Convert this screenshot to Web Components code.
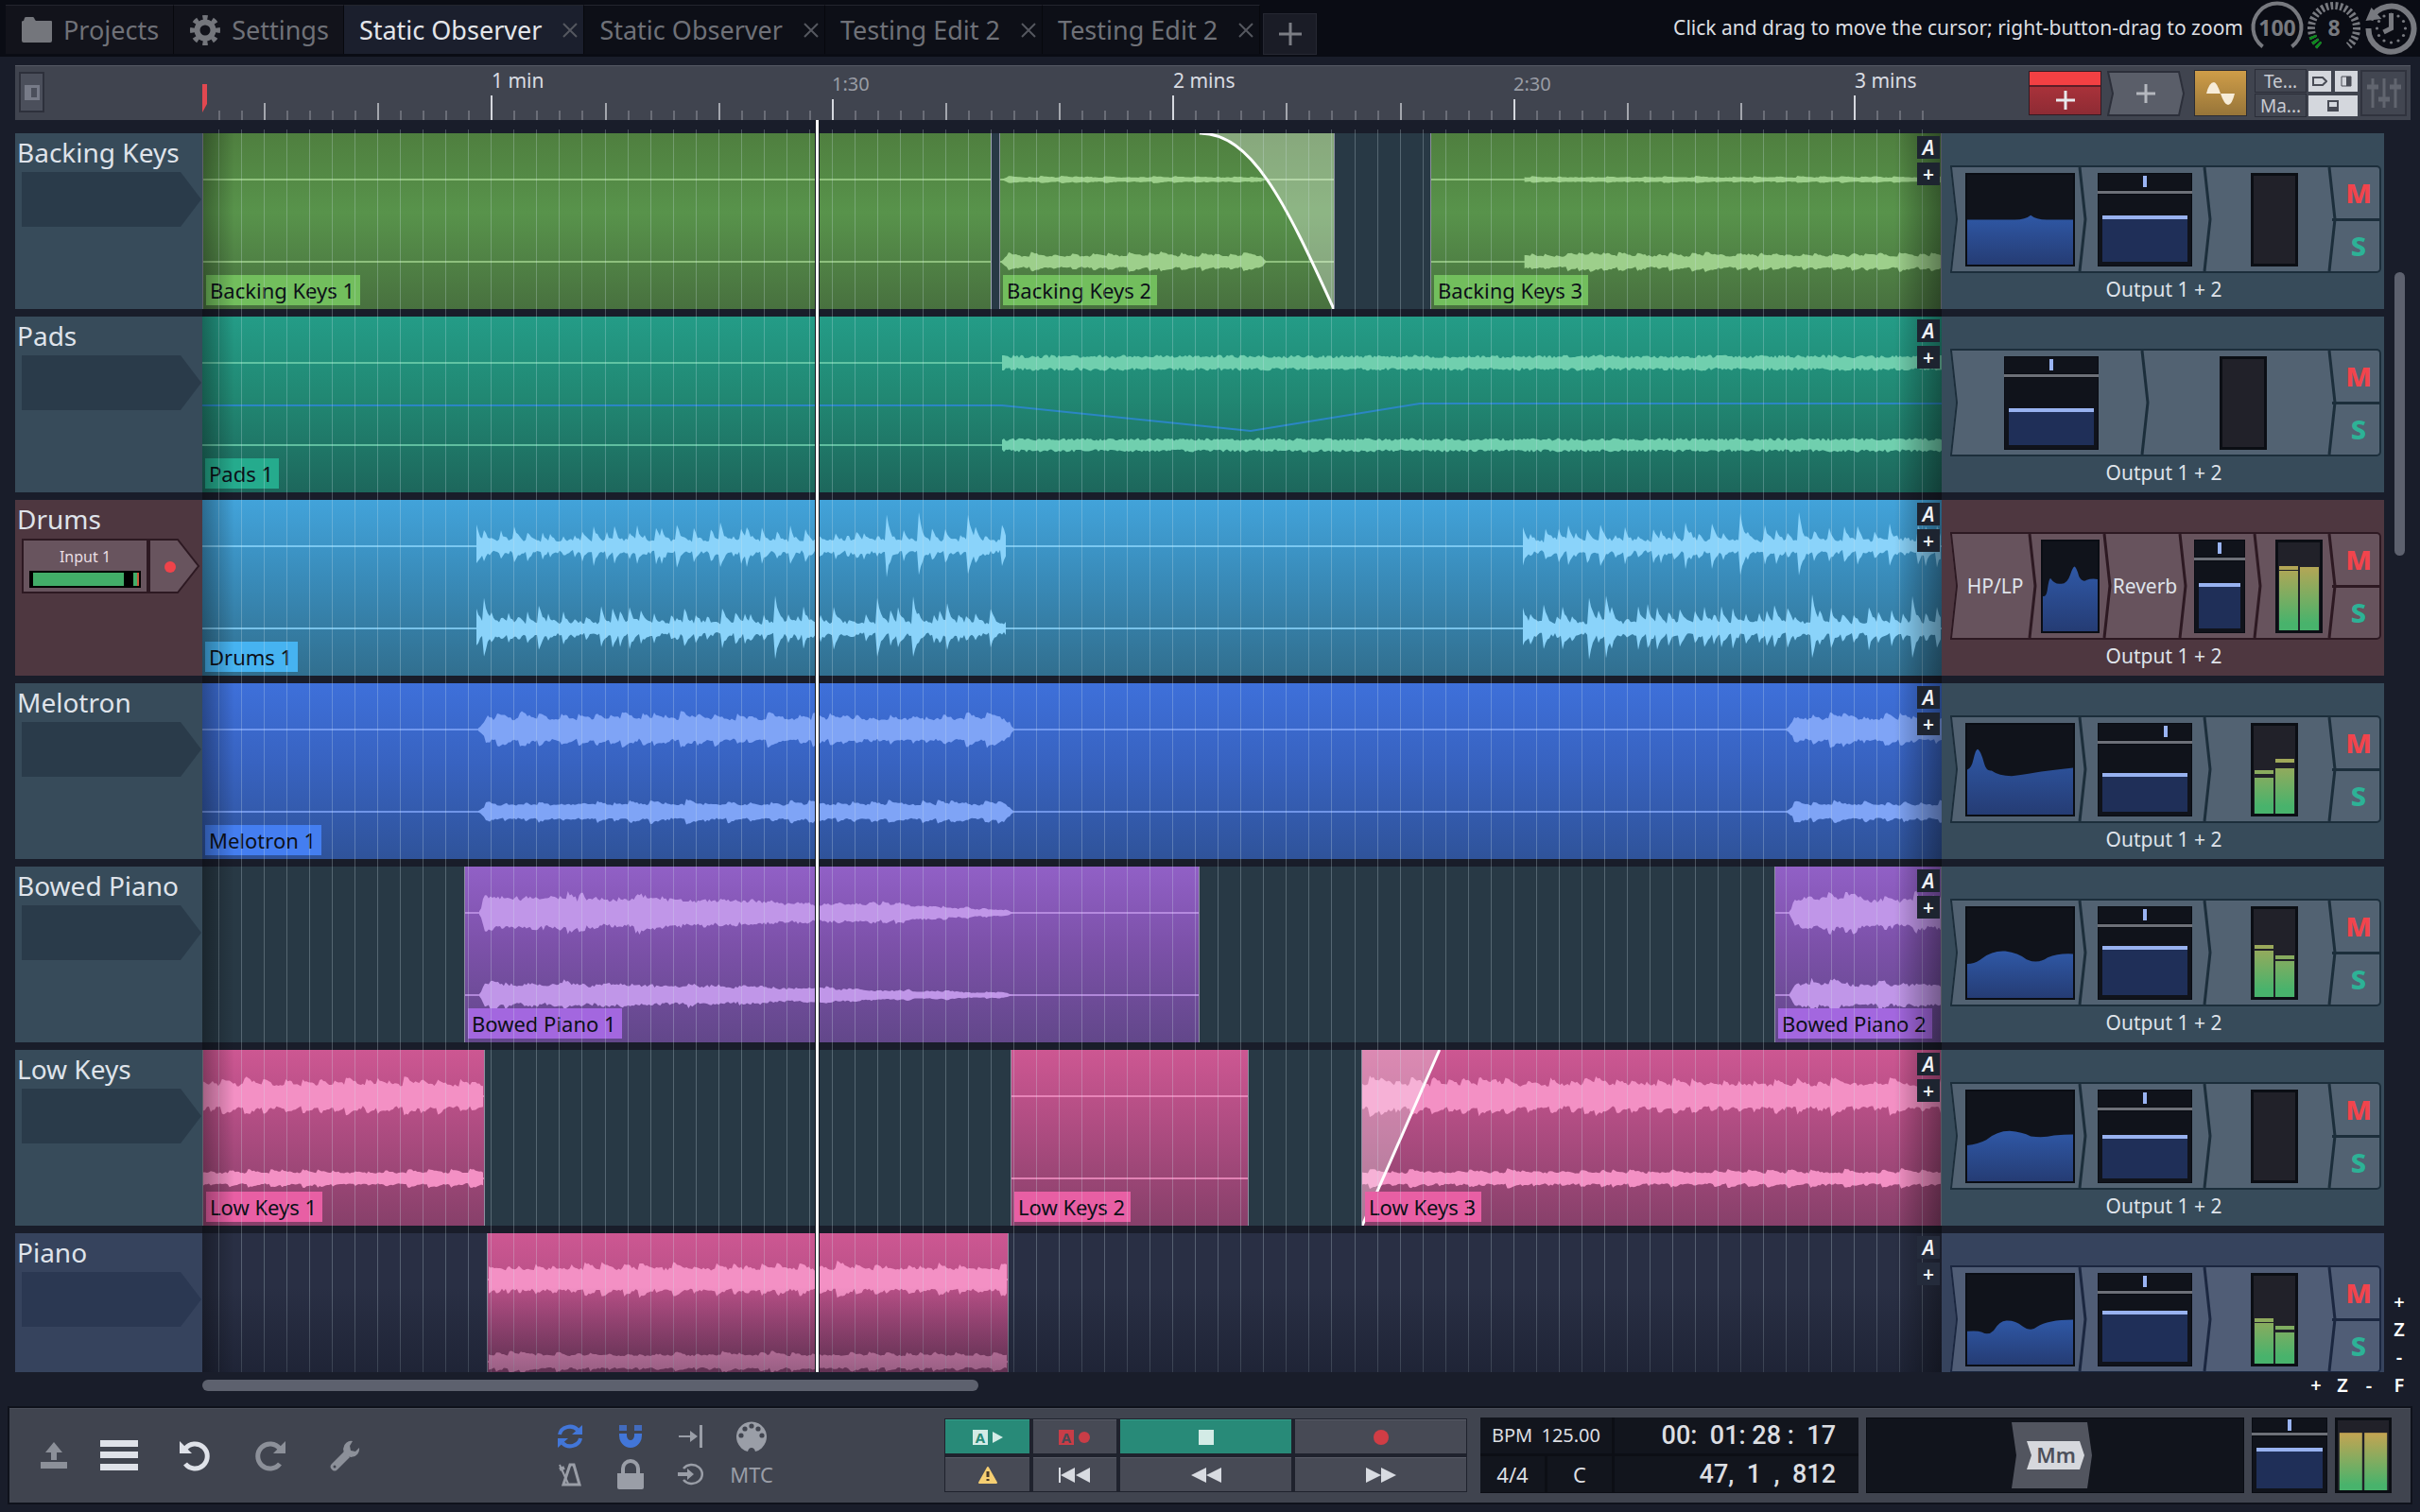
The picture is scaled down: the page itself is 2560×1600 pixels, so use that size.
<!DOCTYPE html>
<html lang="en">
<head>
<meta charset="utf-8">
<title>Static Observer</title>
<style>
  html, body { margin: 0; height: 100%; background: #191d2a; }
  body { font-family: "Noto Sans", "Open Sans", sans-serif; color: #dfe3ea; overflow: hidden; }
</style>
</head>
<body>
<daw-app></daw-app>
<script>
const BASE = `
  *, *::before, *::after { box-sizing: border-box; }
  button { font: inherit; color: inherit; background: none; border: 0; padding: 0; margin: 0; }
  svg { display: block; }
`;

// timeline scale, in design pixels
const TL = 1840;
const ROW = 186;
const ORIGIN = 214;
const STEP = 24.03;
const pct = v => (v / TL * 100).toFixed(3) + '%';

function rng(seed) {
  let s = seed;
  return () => {
    s = (s * 1664525 + 1013904223) % 4294967296;
    return s / 4294967296;
  };
}

// one channel of a waveform, as a closed path round the line y
function wavePath(seg, y, amp, rand) {
  const up = [], down = [];
  const len = seg.to - seg.from;
  let hit = 1, since = 0, next = 8, swell = 0.85;
  for (let x = 0; x <= len; x += 2) {
    const t = x / len;
    let a, b;
    if (seg.kind === 'drum') {
      if (since >= next) {
        hit = 0.3 + rand() * 0.9;
        if (rand() < 0.07) hit = 1.8;
        since = 0;
        next = 5 + rand() * 12;
      }
      a = 0.22 + hit * Math.exp(-since / 4) + rand() * 0.25;
      b = 0.22 + hit * 0.9 * Math.exp(-since / 4) + rand() * 0.25;
      since += 2;
    } else if (seg.kind === 'decay') {
      const env = t < 0.35 ? 1 : 1 - (t - 0.35) * 1.25;
      swell += (rand() - 0.5) * 0.2;
      swell = Math.min(0.95, Math.max(0.7, swell));
      if (rand() < 0.05) hit = 1.45;
      hit = Math.max(1, hit - 0.07);
      a = env * hit * (swell + rand() * 0.25);
      b = env * hit * (swell + rand() * 0.25);
    } else if (seg.kind === 'dense') {
      a = 0.5 + rand() * 0.35;
      b = 0.5 + rand() * 0.35;
    } else {
      if (since >= next) {
        swell = 0.85 + rand() * 0.4;
        since = 0;
        next = 10 + rand() * 14;
      }
      swell = Math.max(0.64, swell - 0.06);
      since += 2;
      a = swell + rand() * 0.2;
      b = swell + rand() * 0.2;
    }
    const ease = Math.min(1, x / (seg.soft || 1), (len - x) / (seg.soft || 1));
    const k = amp * (seg.soft ? Math.max(0.1, ease) : 1);
    up.push((seg.from + x).toFixed(0) + ' ' + (y - a * k).toFixed(1));
    down.unshift((seg.from + x).toFixed(0) + ' ' + (y + b * k).toFixed(1));
  }
  return 'M' + up.join('L') + 'L' + down.join('L') + 'Z';
}

const COLORS = {
  green:  { top: '#4f7f3f', mid: '#58934b', end: '#48713f', wave: '#9dcf8b', tag: '#72be5d' },
  teal:   { top: '#249c87', mid: '#218873', end: '#1d675c', wave: '#70cfae', tag: '#25ab8d' },
  sky:    { top: '#42a3da', mid: '#398bb9', end: '#316f8f', wave: '#8ad3fa', tag: '#46b3f1' },
  blue:   { top: '#3e70da', mid: '#3863c1', end: '#2f539a', wave: '#7fa4f6', tag: '#447ef0' },
  purple: { top: '#9160c6', mid: '#7c51a9', end: '#62478a', wave: '#c096e8', tag: '#a367df' },
  pink:   { top: '#cd5792', mid: '#ae4c81', end: '#87406a', wave: '#f390c4', tag: '#e85fa4' }
};

const THEMES = {
  slate: { head: '#374b5a', lane: '#283945', dark: '#2a3b4a', slot: '#526272', edge: '#1c2e3b' },
  wine:  { head: '#4e3740', lane: '#283945', dark: '#33222a', slot: '#67535d', edge: '#2d1922' },
  navy:  { head: '#36435d', lane: '#292f44', dark: '#2b3852', slot: '#505d76', edge: '#1b2740' }
};

const TRACKS = [
  { name: 'Backing Keys', theme: 'slate', output: 'Output 1 + 2', plugins: [
      { type: 'eq', d: 'M0 50H45Q55 50 60 45Q65 50 75 50H100' }, { type: 'fader', vol: 67 }, { type: 'meter' }],
    clips: [
      { name: 'Backing Keys 1', color: 'green', from: 214, to: 1049, amps: [2, 2], waves: [] },
      { name: 'Backing Keys 2', color: 'green', from: 1057, to: 1412, amps: [3, 8], fadeOut: 1269, waves: [{ from: 1058, to: 1340, soft: 6 }] },
      { name: 'Backing Keys 3', color: 'green', from: 1513, to: 2054, amps: [3, 8], waves: [{ from: 1612, to: 2054 }] }] },
  { name: 'Pads', theme: 'slate', output: 'Output 1 + 2', plugins: [{ type: 'fader', vol: 52 }, { type: 'meter' }],
    clips: [
      { name: 'Pads 1', color: 'teal', from: 214, to: 2054, amps: [10, 9], waves: [{ from: 1060, to: 2054, kind: 'dense' }],
        curve: '214 94 1060 94 1323 121 1502 92 2054 92' }] },
  { name: 'Drums', theme: 'wine', output: 'Output 1 + 2', input: true, plugins: [
      { type: 'text', text: 'HP/LP' },
      { type: 'eq', w: 62, d: 'M0 61Q6 62 8 55Q11 41 14 41Q22 48 32 47Q44 48 50 37Q55 28 58 28Q62 30 66 39Q72 46 80 43Q88 41 100 42' },
      { type: 'text', text: 'Reverb' },
      { type: 'fader', vol: 65, w: 54 },
      { type: 'meter', levels: [[28, 33], [29, 33]] }],
    clips: [
      { name: 'Drums 1', color: 'sky', from: 214, to: 2054, amps: [16, 16], waves: [{ from: 504, to: 1064, kind: 'drum' }, { from: 1611, to: 2054, kind: 'drum' }] }] },
  { name: 'Melotron', theme: 'slate', output: 'Output 1 + 2', plugins: [
      { type: 'eq', d: 'M0 50Q4 49 6 38Q8 27 10 27Q13 29 16 43Q18 52 23 51Q30 57 42 57Q60 54 70 52Q84 50 100 48' },
      { type: 'fader', pan: 75, vol: 55 }, { type: 'meter', levels: [[50, 58], [38, 48]] }],
    clips: [
      { name: 'Melotron 1', color: 'blue', from: 214, to: 2054, amps: [15, 10], waves: [{ from: 506, to: 1072, soft: 9 }, { from: 1890, to: 2070, soft: 9 }] }] },
  { name: 'Bowed Piano', theme: 'slate', output: 'Output 1 + 2', plugins: [
      { type: 'eq', d: 'M0 62Q8 62 14 56Q24 47 36 48Q48 50 56 57Q66 63 76 55Q86 50 100 51' },
      { type: 'fader', vol: 72 }, { type: 'meter', levels: [[41, 47], [52, 58]] }],
    clips: [
      { name: 'Bowed Piano 1', color: 'purple', from: 491, to: 1269, amps: [16, 11], waves: [{ from: 506, to: 1072, kind: 'decay', soft: 6 }] },
      { name: 'Bowed Piano 2', color: 'purple', from: 1877, to: 2054, amps: [15, 11], waves: [{ from: 1892, to: 2440, kind: 'decay', soft: 6 }] }] },
  { name: 'Low Keys', theme: 'slate', output: 'Output 1 + 2', plugins: [
      { type: 'eq', d: 'M0 60Q10 59 18 54Q28 44 40 44Q52 45 60 50Q72 52 82 49Q92 48 100 48' },
      { type: 'fader', vol: 63 }, { type: 'meter' }],
    clips: [
      { name: 'Low Keys 1', color: 'pink', from: 214, to: 513, amps: [16, 8], waves: [{ from: 214, to: 513 }] },
      { name: 'Low Keys 2', color: 'pink', from: 1069, to: 1321, amps: [2, 2], waves: [] },
      { name: 'Low Keys 3', color: 'pink', from: 1440, to: 2054, amps: [16, 8], fadeIn: 1522, waves: [{ from: 1440, to: 2054 }] }] },
  { name: 'Piano', theme: 'navy', plugins: [
      { type: 'eq', d: 'M0 63Q10 62 14 64Q20 68 25 62Q31 50 38 51Q46 51 52 57Q60 64 66 58Q76 50 100 50' },
      { type: 'fader', vol: 75 }, { type: 'meter', levels: [[48, 53], [56, 63]] }],
    clips: [
      { name: '', color: 'pink', from: 515, to: 1067, amps: [15, 9], waves: [{ from: 516, to: 1067 }] }] }
];

class EqView extends HTMLElement {
  connectedCallback() {
    const shadow = this.attachShadow({ mode: 'open' });
    const d = this.getAttribute('curve');
    shadow.innerHTML = `<style>${BASE}
      :host { display: block; background: #10131b; border: 2px solid #0a0d14; }
      svg { width: 100%; height: 100%; }
    </style>
    <svg viewBox="0 0 100 100" preserveAspectRatio="none">
      <defs><linearGradient id="g" x1="0" y1="0" x2="0" y2="1">
        <stop offset="0" stop-color="#2f58a6"/><stop offset="1" stop-color="#253c74"/>
      </linearGradient></defs>
      <path d="${d}V100H0Z" fill="url(#g)"/>
    </svg>`;
  }
}
customElements.define('eq-view', EqView);

class LevelFader extends HTMLElement {
  connectedCallback() {
    const shadow = this.attachShadow({ mode: 'open' });
    const pan = this.getAttribute('pan') || 50;
    const vol = this.getAttribute('vol') || 66;
    shadow.innerHTML = `<style>${BASE}
      :host { display: flex; flex-direction: column; gap: 3px; background: #6d7078; }
      .pan, .vol { background: #10131b; border: 1px solid #090c13; display: flex; }
      .pan { height: 20%; align-items: center; padding: 0 3px; }
      .vol { flex: 1; min-height: 0; padding: 0 4px 4px; }
      input { appearance: none; -webkit-appearance: none; margin: 0; background: transparent; width: 100%; display: block; }
      .pan input { height: 12px; }
      .pan input::-webkit-slider-thumb { -webkit-appearance: none; width: 4px; height: 12px; background: #9ab4f3; }
      .vol input { writing-mode: vertical-lr; direction: rtl; height: 100%; overflow: hidden;
        background: linear-gradient(transparent ${100 - vol}%, #1f2f58 ${100 - vol}%); }
      .vol input::-webkit-slider-thumb { -webkit-appearance: none; width: 200px; height: 4px; background: #98b2f0; }
    </style>
    <div class="pan"><input type="range" min="0" max="100" value="${pan}" aria-label="Pan"></div>
    <div class="vol"><input type="range" min="0" max="100" value="${vol}" aria-label="Volume"></div>`;
  }
}
customElements.define('level-fader', LevelFader);

class LevelMeter extends HTMLElement {
  connectedCallback() {
    const shadow = this.attachShadow({ mode: 'open' });
    const levels = JSON.parse(this.getAttribute('levels') || '[]');
    const plain = this.hasAttribute('plain');
    const bars = levels.map(([peak, top], i) => {
      const x = i ? 26 : 4;
      const cap = plain ? '' : `<rect x="${x}" y="${peak}" width="20" height="4"/>`;
      return cap + `<rect x="${x}" y="${top}" width="20" height="${96 - top}"/>`;
    }).join('');
    shadow.innerHTML = `<style>${BASE}
      :host { display: block; background: #212129; outline: 3px solid #0b0e14; outline-offset: -3px; }
      svg { width: 100%; height: 100%; }
    </style>
    <svg viewBox="0 0 50 99" preserveAspectRatio="none">
      <defs><linearGradient id="m" gradientUnits="userSpaceOnUse" x1="0" y1="20" x2="0" y2="96">
        <stop offset="0" stop-color="#c4a452"/><stop offset=".9" stop-color="#48b36c"/>
      </linearGradient></defs>
      <g fill="url(#m)">${bars}</g>
    </svg>`;
  }
}
customElements.define('level-meter', LevelMeter);

class AudioClip extends HTMLElement {
  set clip(c) {
    const shadow = this.attachShadow({ mode: 'open' });
    const col = COLORS[c.color];
    const w = c.to - c.from;
    const rand = rng(c.from * 7 + c.color.length * 31 + 5);
    this.style.left = pct(c.from - ORIGIN);
    this.style.width = pct(w);
    const paths = c.waves.map(s => {
      const seg = { ...s, from: s.from - c.from, to: s.to - c.from };
      return `<path d="${wavePath(seg, 49, c.amps[0], rand)}"/><path d="${wavePath(seg, 136, c.amps[1], rand)}"/>`;
    }).join('');
    let extra = '';
    if (c.fadeOut) {
      const f = c.fadeOut - c.from;
      const curve = `M${f} 0C${f + 55} 0 ${f + 90} 70 ${w} 186`;
      extra = `<path d="${curve}V0Z" fill="#fff" fill-opacity=".32"/><path d="${curve}" fill="none" stroke="#fff" stroke-width="3"/>`;
    }
    if (c.fadeIn) {
      const f = c.fadeIn - c.from;
      extra = `<path d="M0 0H${f}L0 186Z" fill="#fff" fill-opacity=".3"/><path d="M${f} 0L0 186" stroke="#fff" stroke-width="3"/>`;
    }
    if (c.curve) {
      const pts = c.curve.split(' ').map((v, i) => i % 2 ? v : v - c.from).join(' ');
      extra += `<polyline points="${pts}" fill="none" stroke="#2b86c4" stroke-width="2"/>`;
    }
    shadow.innerHTML = `<style>${BASE}
      :host { position: absolute; top: 0; bottom: 0; overflow: hidden;
        background: linear-gradient(${col.top}, ${col.mid} 45%, ${col.end});
        border-right: 1px solid #8d90a0; border-left: 1px solid #8d90a0; }
      :host(.flush) { border: 0; }
      svg { width: 100%; height: 100%; }
      span { position: absolute; left: 3px; bottom: 4px; height: 32px; line-height: 32px; padding: 0 6px 0 4px; font-size: 22px; color: #0c1018; background: ${col.tag}; white-space: nowrap; }
    </style>
    <svg viewBox="0 0 ${w} ${ROW}" preserveAspectRatio="none">
      <g fill="${col.wave}">
        <rect y="48" width="${w}" height="2" opacity=".8"/><rect y="135" width="${w}" height="2" opacity=".8"/>
        ${paths}
      </g>${extra}
    </svg>${c.name ? `<span>${c.name}</span>` : ''}`;
    if (w === TL) this.className = 'flush';
  }
}
customElements.define('audio-clip', AudioClip);

class PluginStrip extends HTMLElement {
  set track(t) {
    const shadow = this.attachShadow({ mode: 'open' });
    const slots = t.plugins.map(p => {
      let body = '';
      const w = p.w ? `style="width:${p.w}px"` : '';
      if (p.type === 'eq') body = `<eq-view curve="${p.d}" ${w}></eq-view>`;
      if (p.type === 'fader') body = `<level-fader pan="${p.pan || 50}" vol="${p.vol}" ${w}></level-fader>`;
      if (p.type === 'meter') body = `<level-meter levels="${JSON.stringify(p.levels || [])}"></level-meter>`;
      if (p.type === 'text') body = `<button>${p.text}</button>`;
      return `<div class="slot">${body}</div>
        <svg class="edge" viewBox="0 0 8 114" preserveAspectRatio="none"><path d="M1 0L7 57L1 114" fill="none" stroke="var(--edge)" stroke-width="3"/></svg>`;
    }).join('');
    shadow.innerHTML = `<style>${BASE}
      :host { display: block; padding: 34px 3px 0 9px; background: var(--head); height: 186px; font-size: 21px; }
      .strip { display: flex; height: 114px; border: 2px solid var(--edge); border-left: 0; border-radius: 0 5px 5px 0; background: var(--slot); }
      .slot { flex: 1; min-width: 0; display: flex; align-items: center; justify-content: center; }
      .edge { width: 8px; height: 110px; margin: 0 -4px; flex: none; overflow: visible; z-index: 1; }
      .start { width: 8px; height: 110px; flex: none; }
      eq-view { width: 116px; height: 99px; }
      level-fader { width: 100px; height: 99px; }
      level-meter { width: 50px; height: 99px; margin-left: 10px; }
      .ms { width: 50px; display: flex; flex-direction: column; font-size: 29px; font-weight: 800; }
      .ms button { flex: 1; padding-left: 6px; line-height: 28px; }
      .mute { color: #f2444c; border-bottom: 3px solid var(--edge); }
      .solo { color: #2db296; }
      p { margin: 0; line-height: 34px; text-align: center; padding-right: 4px; }
    </style>
    <div class="strip">
      <svg class="start" viewBox="0 0 8 110" preserveAspectRatio="none"><path d="M0 0L6 55L0 110Z" fill="var(--head)"/><path d="M1 0L7 55L1 110" fill="none" stroke="var(--edge)" stroke-width="2"/></svg>
      ${slots}
      <div class="ms"><button class="mute">M</button><button class="solo">S</button></div>
    </div>
    ${t.output ? `<p>${t.output}</p>` : ''}`;
  }
}
customElements.define('plugin-strip', PluginStrip);

class TrackHeader extends HTMLElement {
  set track(t) {
    const shadow = this.attachShadow({ mode: 'open' });
    const input = t.input
      ? `<div class="in">
          <svg viewBox="0 0 190 58"><path d="M1 1H165L187 29L165 57H1Z" fill="#68545e" stroke="#2d1922" stroke-width="2"/><path d="M134 1V57" stroke="#2d1922" stroke-width="4"/><circle cx="157" cy="30" r="6" fill="#f0434a"/></svg>
          <div class="src"><button>Input 1</button><i><b></b><u></u></i></div>
        </div>`
      : `<svg viewBox="0 0 190 58"><path d="M0 0H168L190 29L168 58H0Z" fill="var(--dark)"/></svg>`;
    shadow.innerHTML = `<style>${BASE}
      :host { display: block; height: 186px; padding-left: 7px; background: var(--head); }
      h2 { margin: 0 0 0 -5px; font-size: 28px; font-weight: 400; line-height: 41px; white-space: nowrap; height: 41px; }
      svg { width: 190px; height: 58px; }
      .in { display: grid; }
      .in > * { grid-area: 1 / 1; }
      .src { width: 134px; padding: 8px 8px 0; }
      .src button { display: block; width: 100%; font-size: 16px; line-height: 22px; color: #eadfe4; }
      i { display: flex; height: 18px; margin-top: 4px; background: #000; padding: 2px 2px 2px 4px; justify-content: space-between; }
      b { width: 96px; background: #42ad68; }
      u { width: 6px; background: #42ad68; border-right: 2px solid #c65a3c; }
    </style>
    <h2>${t.name}</h2>${input}`;
  }
}
customElements.define('track-header', TrackHeader);

class TrackRow extends HTMLElement {
  set track(t) {
    const shadow = this.attachShadow({ mode: 'open' });
    const th = THEMES[t.theme];
    shadow.innerHTML = `<style>${BASE}
      :host { display: grid; grid-template-columns: 198px minmax(0, 1fr) 468px; height: 186px; flex: none;
        --head: ${th.head}; --dark: ${th.dark}; --slot: ${th.slot}; --edge: ${th.edge}; }
      .lane { position: relative; background: ${th.lane}; overflow: hidden; }
      .badges { position: absolute; right: 2px; top: 3px; display: grid; gap: 4px; z-index: 1; }
      .badges button { width: 24px; height: 24px; background: #1d2430; color: #eef0f4; font-size: 21px; line-height: 24px; font-weight: 600; }
      .badges button:first-child { font-style: italic; }
      .badges.bare button { background: #242b3b; }
    </style>
    <track-header></track-header>
    <div class="lane"><div class="badges ${t.theme === 'navy' ? 'bare' : ''}"><button>A</button><button>+</button></div></div>
    <plugin-strip></plugin-strip>`;
    shadow.querySelector('track-header').track = t;
    shadow.querySelector('plugin-strip').track = t;
    const lane = shadow.querySelector('.lane');
    t.clips.forEach(c => {
      const el = document.createElement('audio-clip');
      el.clip = c;
      lane.insertBefore(el, lane.lastChild);
    });
  }
}
customElements.define('track-row', TrackRow);

class DawTracks extends HTMLElement {
  connectedCallback() {
    const shadow = this.attachShadow({ mode: 'open' });
    let lines = '';
    for (let x = 17; x < TL; x += STEP) {
      lines += `<rect x="${pct(x)}" y="10" width="1" height="100%"/>`;
    }
    shadow.innerHTML = `<style>${BASE}
      :host { display: grid; grid-template-columns: minmax(0, 1fr) 28px; position: relative; min-height: 0; }
      .rows { display: flex; flex-direction: column; gap: 8px; overflow: hidden; min-height: 0; }
      .over { position: absolute; left: 198px; right: 496px; top: -14px; bottom: 0; pointer-events: none; }
      .over svg { width: 100%; height: 100%; fill: #d4e4ee; fill-opacity: .27; }
      .shade { position: absolute; left: 0; right: 0; top: 14px; bottom: 0;
        background: linear-gradient(90deg, #0005, #0000 34px, #0000 calc(100% - 50px), #0006), linear-gradient(0deg, #10142266, #0000 90px); }
      .head { position: absolute; left: ${pct(862 - ORIGIN)}; top: 0; bottom: 0; width: 5px; background: #fff; border: solid #15181f; border-width: 0 1px; }
      .gutter { display: flex; flex-direction: column; align-items: center; padding: 0 0 2px 4px; font-size: 20px; font-weight: 600; color: #fff; }
      .thumb { width: 11px; border-radius: 6px; background: #5d616e; flex: 300; }
      .before { flex: 147; }
      .after { flex: 775; }
      .gutter button { height: 29px; width: 24px; line-height: 29px; flex: none; }
    </style>
    <div class="rows"></div>
    <div class="gutter">
      <div class="before"></div><div class="thumb"></div><div class="after"></div>
      <button>+</button><button>Z</button><button>-</button>
    </div>
    <div class="over"><div class="shade"></div><svg shape-rendering="crispEdges">${lines}</svg><div class="head"></div></div>`;
    const rows = shadow.querySelector('.rows');
    TRACKS.forEach(t => {
      const row = document.createElement('track-row');
      row.track = t;
      rows.appendChild(row);
    });
  }
}
customElements.define('daw-tracks', DawTracks);

class DawTab extends HTMLElement {
  connectedCallback() {
    const shadow = this.attachShadow({ mode: 'open' });
    const close = this.hasAttribute('closable')
      ? '<button class="x" aria-label="Close"><svg viewBox="0 0 20 20"><path d="M3 3L17 17M17 3L3 17" stroke="currentColor" stroke-width="2"/></svg></button>' : '';
    shadow.innerHTML = `<style>${BASE}
      :host { display: flex; align-items: center; gap: 20px; height: 52px; padding: 0 4px 0 16px; background: #0d0f17; border-top: 1px solid #23252e; border-right: 1px solid #07080d; color: #6f7178; font-size: 27px; white-space: nowrap; }
      :host([icon]) { background: #12131b; padding: 0 15px 0 17px; }
      :host([active]) { background: #1b1f2d; color: #e4e6ea; }
      .label { display: flex; align-items: center; gap: 12px; line-height: 40px; }
      .x { width: 20px; height: 20px; color: #55575f; }
    </style>
    <button class="label"><slot name="icon"></slot><slot></slot></button>${close}`;
  }
}
customElements.define('daw-tab', DawTab);

class DawTabs extends HTMLElement {
  connectedCallback() {
    const shadow = this.attachShadow({ mode: 'open' });
    const arc = 'M14.6 48.4A24 24 0 1 1 45.4 48.4';
    let dots = '';
    for (let i = 0; i < 12; i++) {
      const a = i * Math.PI / 6;
      dots += `<circle cx="${(30 + 15 * Math.cos(a)).toFixed(1)}" cy="${(30 + 15 * Math.sin(a)).toFixed(1)}" r="1.6"/>`;
    }
    shadow.innerHTML = `<style>${BASE}
      :host { display: flex; height: 60px; padding: 5px 0 0 6px; background: #0a0c14; }
      .add { width: 57px; height: 44px; margin: 9px 0 0 3px; background: #1a1c26; border: 1px solid #262832; color: #7b7d84; display: grid; place-items: center; }
      .hint { margin: 0 6px 0 auto; font-size: 21px; line-height: 49px; color: #dcdee2; white-space: nowrap; }
      .status { display: flex; margin-top: -5px; }
      text { font-weight: 700; font-size: 23px; text-anchor: middle; fill: #77797f; }
    </style>
    <daw-tab icon><svg slot="icon" width="32" height="27" viewBox="0 0 32 27" fill="#74767c"><path d="M0 25V5Q0 4 2 4L3 1Q3 0 5 0H12Q13 0 14 3L15 4H31Q32 4 32 5V25Q32 27 30 27H2Q0 27 0 25Z"/></svg>Projects</daw-tab>
    <daw-tab icon><svg slot="icon" width="32" height="32" viewBox="0 0 32 32" fill="none" stroke="#74767c"><circle cx="16" cy="16" r="13" stroke-width="6" pathLength="80" stroke-dasharray="5 5" stroke-dashoffset="2.5"/><circle cx="16" cy="16" r="8.5" stroke-width="6"/></svg>Settings</daw-tab>
    <daw-tab closable active>Static Observer</daw-tab>
    <daw-tab closable>Static Observer</daw-tab>
    <daw-tab closable>Testing Edit 2</daw-tab>
    <daw-tab closable>Testing Edit 2</daw-tab>
    <button class="add" aria-label="New tab"><svg width="26" height="26" viewBox="0 0 26 26"><path d="M13 1V25M1 13H25" stroke="currentColor" stroke-width="3"/></svg></button>
    <p class="hint">Click and drag to move the cursor; right-button-drag to zoom</p>
    <div class="status">
      <svg width="60" height="60" viewBox="0 0 60 60"><path d="M14.6 49.4A25.5 25.5 0 1 1 45.4 49.4" fill="none" stroke="#77797f" stroke-width="4"/><text x="30" y="38">100</text></svg>
      <svg width="60" height="60" viewBox="0 0 60 60" fill="none" stroke-width="8"><path d="${arc}" pathLength="48" stroke="#77797f" stroke-dasharray="1.1 .95"/><path d="${arc}" pathLength="48" stroke="#0c8a1c" stroke-dasharray="1.1 .95 1.1 .95 1.1 90"/><text x="30" y="38">8</text></svg>
      <svg width="61" height="60" viewBox="0 0 60 60" fill="#77797f"><path d="M8 21A24 24 0 1 1 6 30" fill="none" stroke="#77797f" stroke-width="6"/><path d="M3 22L9 8L20 20Z"/>${dots}<path d="M30 14V30L22 34" fill="none" stroke="#77797f" stroke-width="5"/></svg>
    </div>`;
  }
}
customElements.define('daw-tabs', DawTabs);

class DawRuler extends HTMLElement {
  connectedCallback() {
    const shadow = this.attachShadow({ mode: 'open' });
    let ticks = '';
    // two-second ticks; 0:36 is the first one in view
    for (let i = 0, s = 36; s <= 186; i++, s += 2) {
      const h = s % 60 === 0 ? 26 : s % 30 === 0 ? 22 : s % 10 === 0 ? 18 : 10;
      const c = h >= 22 ? '#d5d8de' : h === 18 ? '#a4a7ae' : '#6a6d77';
      ticks += `<i style="left:${pct(17 + i * STEP)};height:${h}px;background:${c}"></i>`;
    }
    const mark = (x, text, cls) => `<span class="${cls}" style="left:${pct(x - ORIGIN)}">${text}</span>`;
    shadow.innerHTML = `<style>${BASE}
      :host { display: block; position: relative; height: 100%; font-size: 21px; line-height: 24px; }
      i { position: absolute; bottom: 0; width: 2px; }
      span { position: absolute; top: 3px; white-space: nowrap; color: #d9dce2; }
      .half { top: 7px; font-size: 20px; color: #9a9da5; }
      svg { position: absolute; left: 0; top: 19px; }
    </style>
    ${ticks}
    ${mark(520, '1 min', 'full')}${mark(880, '1:30', 'half')}${mark(1241, '2 mins', 'full')}${mark(1601, '2:30', 'half')}${mark(1962, '3 mins', 'full')}
    <svg width="6" height="30" viewBox="0 0 6 30"><path d="M0 0H5V21L0 30Z" fill="#e24850"/></svg>`;
  }
}
customElements.define('daw-ruler', DawRuler);

class DawToolbar extends HTMLElement {
  connectedCallback() {
    const shadow = this.attachShadow({ mode: 'open' });
    const plus = '<path d="M10 0V20M0 10H20" stroke="#e8e8ec" stroke-width="3"/>';
    shadow.innerHTML = `<style>${BASE}
      :host { display: grid; grid-template-columns: 198px minmax(0, 1fr) 496px; background: #40444f; border-top: 1px solid #555964; }
      .side { width: 27px; height: 43px; margin: 6px 4px; border: 2px solid #2d303b; background: #4b4f5b; display: grid; place-items: center; }
      .tools { display: flex; align-items: center; justify-content: flex-end; padding-right: 4px; }
      .tools button { display: grid; place-items: center; }
      .rec { width: 77px; height: 47px; border: 1px solid #321a23; background: linear-gradient(#f34043 0 14px, #5b1e27 14px 16px, #a8323a 16px, #8e2b34); padding-top: 14px; margin-right: 6px; }
      .fx { margin-right: 10px; }
      .auto { width: 56px; height: 49px; border: 1px solid #2b2c34; background: linear-gradient(#cf9d48, #977539); margin-right: 9px; }
      .text { display: grid; gap: 3px; width: 53px; margin-right: 3px; }
      .text button { height: 23px; font-size: 19px; line-height: 22px; background: #424651; outline: 1px solid #2a2d38; color: #c9ccd3; }
      .views { display: grid; grid-template-columns: 24px 24px; gap: 4px; margin-right: 3px; }
      .views button { height: 22px; background: #d4d7dd; }
      .views button:last-child { grid-column: span 2; }
      .mix { width: 49px; height: 49px; border: 2px solid #30333e; background: #424651; }
    </style>
    <button class="side" aria-label="Toggle browser"><svg width="16" height="16"><path d="M0 0H16V16H0Z" fill="#777b88"/><path d="M7 3H13V13H7Z" fill="#4b4f5b"/></svg></button>
    <daw-ruler></daw-ruler>
    <div class="tools">
      <button class="rec" aria-label="Add track"><svg width="20" height="20">${plus}</svg></button>
      <button class="fx" aria-label="Add plugin"><svg width="82" height="48" viewBox="0 0 82 48"><path d="M1 1H76L81 24L76 47H1L6 24Z" fill="#5a5e69" stroke="#2c2f3a" stroke-width="2"/><path d="M41 14V34M31 24H51" stroke="#b4b7be" stroke-width="3"/></svg></button>
      <button class="auto" aria-label="Automation"><svg width="30" height="24" viewBox="0 0 30 24" fill="#f7ecd8"><path d="M0 12Q3 0 8 0Q11 0 15 12Z"/><path d="M15 12H30Q27 24 23 24Q19 24 15 12Z"/></svg></button>
      <div class="text"><button>Te...</button><button>Ma...</button></div>
      <div class="views">
        <button aria-label="Show inputs"><svg width="16" height="10"><path d="M1 1H11L15 5L11 9H1Z" fill="none" stroke="#484b55" stroke-width="2"/></svg></button>
        <button aria-label="Show plugins"><svg width="12" height="12"><path d="M1 1H11V11H1Z" fill="none" stroke="#484b55" stroke-width="1"/><path d="M6 1H11V11H6Z" fill="#484b55"/></svg></button>
        <button aria-label="Show controls"><svg width="12" height="12"><path d="M1 1H11V11H1Z" fill="none" stroke="#484b55" stroke-width="2"/><path d="M1 7H11V11H1Z" fill="#484b55"/></svg></button>
      </div>
      <button class="mix" aria-label="Mixer"><svg width="38" height="34" viewBox="0 0 38 34" stroke="#61656f" stroke-width="3"><path d="M7 1V32M19 1V32M31 1V32"/><path d="M1 10H13M13 23H25M25 10H37" stroke-width="5"/></svg></button>
    </div>`;
  }
}
customElements.define('daw-toolbar', DawToolbar);

class TransportBar extends HTMLElement {
  connectedCallback() {
    const shadow = this.attachShadow({ mode: 'open' });
    shadow.innerHTML = `<style>${BASE}
      :host { display: flex; align-items: center; height: 100px; margin: 0 10px 10px; padding: 0 20px 1px 18px; background: #40444f; border-top: 1px solid #4c505b; outline: 2px solid #0f121b; color: #8c9099; }
      .tools { display: flex; flex: 1; }
      .tools button { width: 80px; height: 60px; display: grid; place-items: center; }
      .tools button:first-child { width: 58px; }
      .tools .bright { color: #dfe2e9; }
      .opts { display: grid; grid-template-columns: repeat(4, 64px); grid-auto-rows: 40px; margin-right: 172px; font-size: 22px; }
      .opts button { display: grid; place-items: center; color: #9a9ea7; }
      .opts .on { color: #4276d8; }
      .keys { display: grid; grid-template-columns: 89px 88px 181px 181px; grid-auto-rows: 36px; gap: 4px; padding: 1px; background: #1f222d; margin-right: 14px; flex: none; }
      .keys button { background: #474a55; border-top: 1px solid #595c67; display: grid; place-items: center; color: #d8dbe1; }
      .keys .on { background: #288a78; border-color: #35a08c; }
      .keys text { font: 700 15px "Noto Sans", sans-serif; text-anchor: middle; }
      .lcd { display: grid; grid-template-columns: 68px 68px 1fr; grid-auto-rows: 38px; gap: 3px; width: 400px; height: 80px; background: #0c0e15; margin-right: 8px; flex: none; }
      .lcd > * { background: #12151d; color: #dcdee2; font-size: 22px; line-height: 38px; text-align: center; }
      .lcd .bpm { grid-column: span 2; display: flex; justify-content: space-between; padding: 0 12px; font-size: 20px; }
      .lcd .clock { text-align: right; padding-right: 24px; font-family: Roboto, sans-serif; font-weight: 500; font-size: 27px; white-space: pre; }
      .master { display: grid; place-items: center; width: 400px; height: 80px; background: #11141c; border: 1px solid #090c13; margin-right: 8px; padding-right: 6px; flex: none; }
      .master text { font: 600 22px "Noto Sans", sans-serif; text-anchor: middle; fill: #4d505b; }
      level-fader { width: 80px; height: 80px; margin-right: 8px; flex: none; }
      level-meter { width: 60px; height: 80px; flex: none; }
    </style>
    <div class="tools">
      <button aria-label="Export"><svg width="28" height="28" viewBox="0 0 28 28" fill="currentColor"><path d="M0 21H28V28H0Z"/><path d="M14 0L23 11H17V19H11V11H5Z"/></svg></button>
      <button class="bright" aria-label="Menu"><svg width="40" height="32" fill="currentColor"><path d="M0 0H40V7H0ZM0 12H40V19H0ZM0 25H40V32H0Z"/></svg></button>
      <button class="bright" aria-label="Undo"><svg width="34" height="34" viewBox="0 0 34 34" fill="none" stroke="currentColor" stroke-width="5"><path d="M7 10A13 13 0 1 1 7 26"/><path d="M1 2V15H14Z" fill="currentColor" stroke="none"/></svg></button>
      <button aria-label="Redo"><svg width="34" height="34" viewBox="0 0 34 34" fill="none" stroke="currentColor" stroke-width="5"><path d="M27 10A13 13 0 1 0 27 26"/><path d="M33 2V15H20Z" fill="currentColor" stroke="none"/></svg></button>
      <button aria-label="Tools"><svg width="34" height="34" viewBox="0 0 34 34" fill="currentColor"><path d="M15 13L21 19L8 32Q5 35 2 32Q-1 29 2 26Z"/><path d="M31 9A8.500 8.500 0 1 1 24 2L21 7L22 12L27 13Z"/><circle cx="5" cy="29" r="1.5" fill="#40444f"/></svg></button>
    </div>
    <div class="opts">
      <button class="on" aria-label="Loop"><svg width="28" height="26" viewBox="0 0 28 26" fill="none" stroke="currentColor" stroke-width="4"><path d="M3 11A11 10 0 0 1 22 6M25 15A11 10 0 0 1 6 20"/><path d="M27 1V11H16ZM1 25V15H12Z" fill="currentColor" stroke="none"/></svg></button>
      <button class="on" aria-label="Snap"><svg width="26" height="26" viewBox="0 0 26 26" fill="none" stroke="currentColor" stroke-width="8"><path d="M5 10V12A8 9 0 0 0 21 12V10"/><path d="M5 1V7M21 1V7" opacity=".8"/></svg></button>
      <button aria-label="Punch"><svg width="26" height="24" viewBox="0 0 26 24" fill="currentColor"><path d="M22 0H25V24H22Z"/><path d="M0 11H12V6L20 12L12 18V13H0Z"/></svg></button>
      <button aria-label="MIDI"><svg width="34" height="33" viewBox="0 0 34 33"><path d="M13 32A16 16 0 1 1 21 32Q20 28 17 28Q14 28 13 32Z" fill="currentColor"/><g fill="#40444f"><circle cx="6" cy="15" r="2.600"/><circle cx="10" cy="8" r="2.600"/><circle cx="17" cy="5" r="2.600"/><circle cx="24" cy="8" r="2.600"/><circle cx="28" cy="15" r="2.600"/></g></svg></button>
      <button aria-label="Click"><svg width="24" height="25" viewBox="0 0 24 25" fill="none" stroke="currentColor" stroke-width="3"><path d="M5 23L12 2H16L22 23Z"/><path d="M1 2L10 22" stroke-width="2"/><path d="M1 7L6 5" stroke-width="4"/></svg></button>
      <button aria-label="Lock"><svg width="28" height="32" viewBox="0 0 28 32"><path d="M0 15H28V30Q28 32 26 32H2Q0 32 0 30Z" fill="currentColor"/><path d="M6 16V10A8 8 0 0 1 22 10V16" fill="none" stroke="currentColor" stroke-width="4"/></svg></button>
      <button aria-label="Scroll"><svg width="28" height="24" viewBox="0 0 28 24"><path d="M6 6A11 10 0 1 1 6 18" fill="none" stroke="currentColor" stroke-width="2.500"/><path d="M0 10H10V6L17 12L10 18V14H0Z" fill="currentColor"/></svg></button>
      <button>MTC</button>
    </div>
    <div class="keys">
      <button class="on" aria-label="Auto read"><svg width="34" height="20"><path d="M1 2H17V18H1Z" fill="#d3ebe6"/><text x="9" y="16" fill="#288a78">A</text><path d="M22 4L33 10L22 16Z" fill="#d3ebe6"/></svg></button>
      <button aria-label="Auto write"><svg width="36" height="20"><path d="M1 2H17V18H1Z" fill="#c93d47"/><text x="9" y="16" fill="#474a55">A</text><circle cx="28" cy="10" r="6" fill="#c93d47"/></svg></button>
      <button class="on" aria-label="Stop"><svg width="16" height="16"><path d="M0 0H16V16H0Z" fill="#d3ebe6"/></svg></button>
      <button aria-label="Record"><svg width="18" height="18"><circle cx="9" cy="9" r="8" fill="#d03d45"/></svg></button>
      <button aria-label="Warnings"><svg width="20" height="18" viewBox="0 0 20 18"><path d="M10 1L19 17H1Z" fill="#f6cf72" stroke="#f6cf72" stroke-width="2" stroke-linejoin="round"/><path d="M10 5V11M10 13V15" stroke="#4a3a28" stroke-width="3"/></svg></button>
      <button aria-label="To start"><svg width="34" height="16" fill="currentColor"><path d="M0 0H2V16H0ZM17 0V16L2 8ZM33 0V16L18 8Z"/></svg></button>
      <button aria-label="Rewind"><svg width="32" height="16" fill="currentColor"><path d="M16 0V16L0 8ZM32 0V16L16 8Z"/></svg></button>
      <button aria-label="Forward"><svg width="32" height="16" fill="currentColor"><path d="M0 0V16L16 8ZM16 0V16L32 8Z"/></svg></button>
    </div>
    <div class="lcd">
      <div class="bpm"><span>BPM</span><span>125.00</span></div>
      <div class="clock">00:  01: 28 :  17</div>
      <div>4/4</div><div>C</div>
      <div class="clock">47,  1  ,  812</div>
    </div>
    <div class="master"><svg width="86" height="70" viewBox="0 0 86 70"><path d="M0 0H80L85 35L80 70H0L5 35Z" fill="#52555f"/><path d="M16 20H72L77 35L72 50H16L21 35Z" fill="#d6d8dd"/><text x="47" y="43">Mm</text></svg></div>
    <level-fader pan="50" vol="76"></level-fader>
    <level-meter levels="[[20,20],[20,20]]" plain></level-meter>`;
  }
}
customElements.define('transport-bar', TransportBar);

class DawApp extends HTMLElement {
  connectedCallback() {
    const shadow = this.attachShadow({ mode: 'open' });
    shadow.innerHTML = `<style>${BASE}
      :host { display: grid; grid-template-rows: 60px 67px minmax(0, 1fr) 38px auto; height: 100vh; }
      daw-toolbar { margin: 9px 10px 0 16px; height: 58px; }
      daw-tracks { margin: 14px 10px 0 16px; }
      .scroll { display: grid; grid-template-columns: minmax(0, 1fr) 496px; align-items: center; margin: 0 10px 0 214px; padding-bottom: 10px; }
      .thumb { width: 44.6%; height: 12px; border-radius: 6px; background: #5d616e; }
      .zoom { display: flex; justify-content: flex-end; font-size: 20px; font-weight: 600; color: #fff; }
      .zoom button { width: 28px; height: 28px; line-height: 28px; }
      .zoom button:last-child { width: 24px; margin-left: 6px; }
    </style>
    <daw-tabs></daw-tabs>
    <daw-toolbar></daw-toolbar>
    <daw-tracks></daw-tracks>
    <div class="scroll"><div class="thumb"></div><div class="zoom"><button>+</button><button>Z</button><button>-</button><button>F</button></div></div>
    <transport-bar></transport-bar>`;
  }
}
customElements.define('daw-app', DawApp);
</script>
</body>
</html>
